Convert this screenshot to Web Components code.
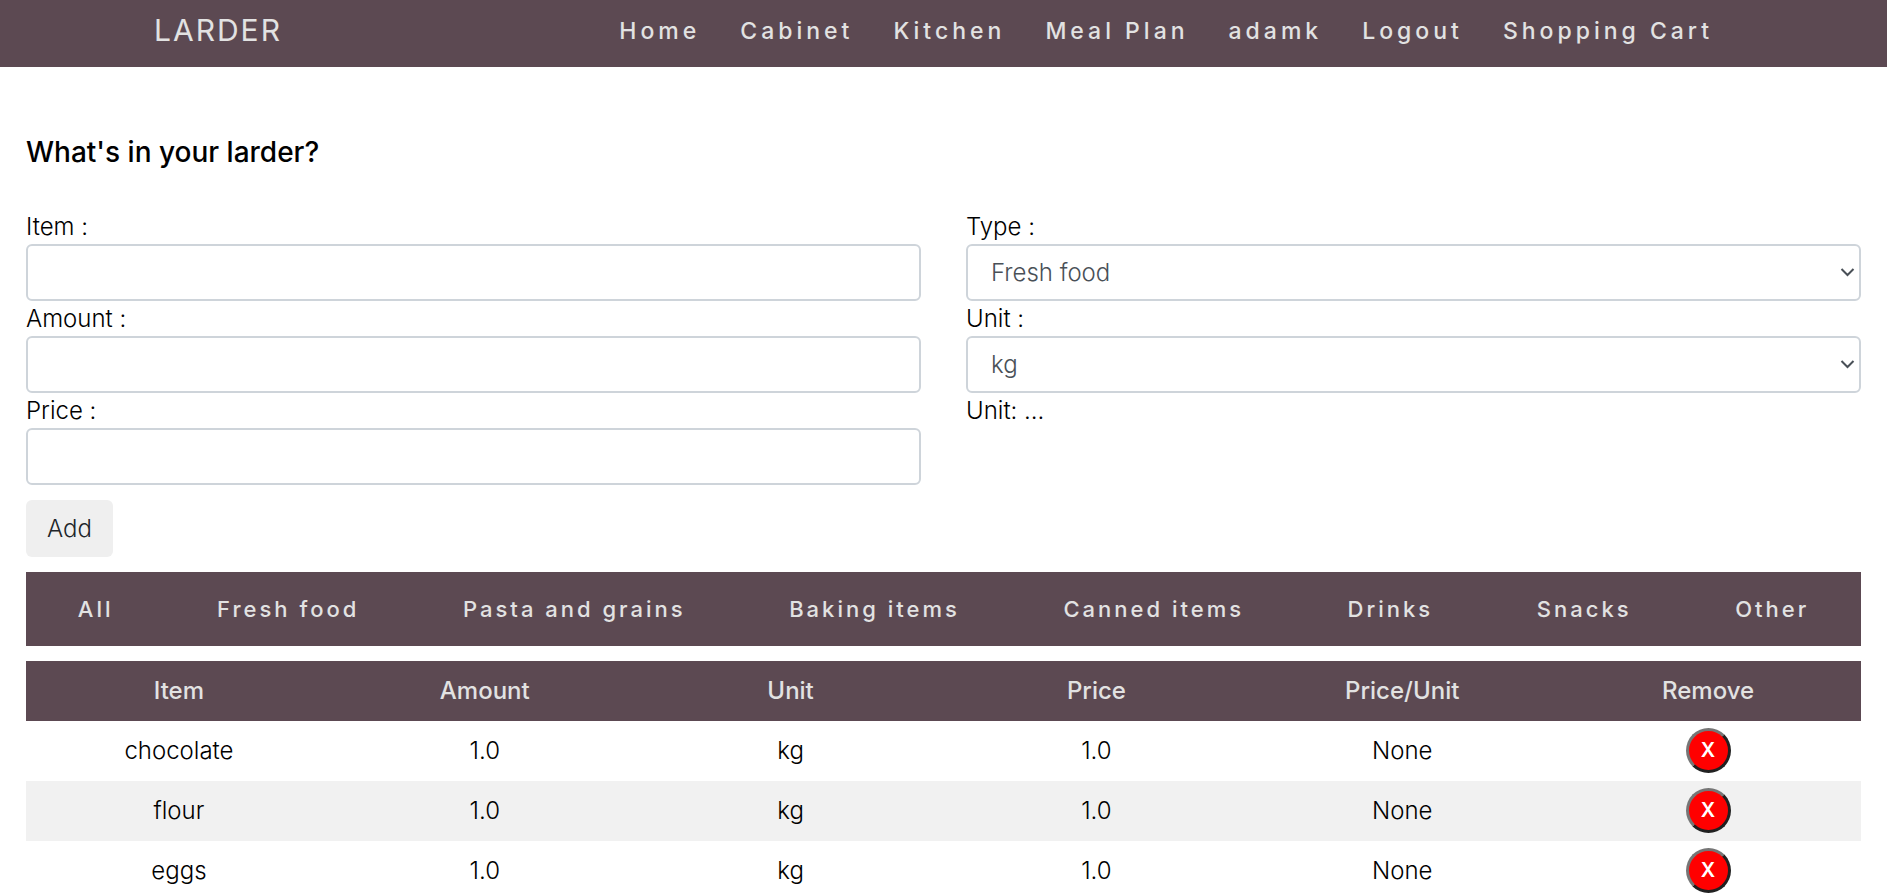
<!DOCTYPE html>
<html lang="en">
<head>
<meta charset="utf-8">
<title>Larder</title>
<style>
  :root { --plum: #5c4952; --pale: #e2e2e2; --line: #ced4da; }
  body { margin: 0; background: #fff; color: #000; font: 300 24px/36px Inter, "Open Sans", sans-serif; }
</style>
</head>
<body>
<larder-page></larder-page>
<script>
const make = (tag, html, setup) => customElements.define(tag, class extends HTMLElement {
  constructor() {
    super();
    this.attachShadow({ mode: "open" }).innerHTML = html;
  }
  connectedCallback() { if (setup) setup(this, this.shadowRoot); }
});

/* Top navigation bar */
make("larder-nav", `
<style>
  :host { display: block; background: var(--plum); }
  nav { display: flex; justify-content: space-between; align-items: center; height: 67px; padding: 0 174px 0 154px; box-sizing: border-box; }
  a { color: var(--pale); text-decoration: none; white-space: nowrap; }
  .brand { font-size: 30px; font-weight: 400; letter-spacing: 2px; padding-bottom: 8px; }
  ul { display: flex; gap: 40px; list-style: none; margin: 0; padding: 0 0 6px; }
  ul a { font-size: 23px; font-weight: 500; letter-spacing: 4px; }
</style>
<nav>
  <a class="brand" href="#">LARDER</a>
  <ul>
    <li><a href="#">Home</a></li><li><a href="#">Cabinet</a></li><li><a href="#">Kitchen</a></li>
    <li><a href="#">Meal Plan</a></li><li><a href="#">adamk</a></li><li><a href="#">Logout</a></li>
    <li><a href="#">Shopping Cart</a></li>
  </ul>
</nav>`);

/* Label with a text box, or with a drop-down when options are given */
make("larder-field", `
<style>
  :host { display: block; }
  label { display: block; height: 35px; line-height: 35px; }
  .box { position: relative; }
  input, select { display: block; width: 100%; height: 57px; box-sizing: border-box; margin: 0; padding: 0 23px;
    border: 2px solid var(--line); border-radius: 6px; background: #fff; color: #495057; font: inherit; appearance: none; }
  svg { position: absolute; right: 6px; top: 22px; pointer-events: none; }
</style>
<label for="control"></label><div class="box"></div>`, (el, root) => {
  root.querySelector("label").textContent = el.getAttribute("label");
  const options = el.getAttribute("options");
  root.querySelector(".box").innerHTML = options
    ? `<select id="control">${options.split(",").map(o => `<option>${o}</option>`).join("")}</select>
       <svg width="15" height="13" viewBox="0 0 15 13" fill="none" stroke="#495057" stroke-width="2"><path d="M1.5 3 L7.5 9 L13.5 3"/></svg>`
    : `<input id="control" type="text">`;
});

/* Form for adding an item */
make("larder-form", `
<style>
  :host { display: block; }
  form { display: grid; grid-template-columns: 1fr 1fr; column-gap: 45px; margin: 0; }
  p { margin: 0; height: 35px; line-height: 35px; }
  button { display: block; margin: 15px 0; height: 57px; padding: 0 21px; border: 0; border-radius: 6px;
    background: #efefef; color: #212529; font: inherit; }
</style>
<form>
  <div>
    <larder-field label="Item :"></larder-field>
    <larder-field label="Amount :"></larder-field>
    <larder-field label="Price :"></larder-field>
    <button type="button">Add</button>
  </div>
  <div>
    <larder-field label="Type :" options="Fresh food,Pasta and grains,Baking items,Canned items,Drinks,Snacks,Other"></larder-field>
    <larder-field label="Unit :" options="kg,g,l,ml"></larder-field>
    <p>Unit: ...</p>
  </div>
</form>`);

/* Category filter bar */
make("larder-filter", `
<style>
  :host { display: block; background: var(--plum); }
  nav { display: flex; justify-content: space-around; align-items: center; height: 74px; }
  a { color: var(--pale); text-decoration: none; font-size: 22px; font-weight: 500; letter-spacing: 3px; white-space: nowrap; }
</style>
<nav><a href="#">All</a><a href="#">Fresh food</a><a href="#">Pasta and grains</a><a href="#">Baking items</a><a href="#">Canned items</a><a href="#">Drinks</a><a href="#">Snacks</a><a href="#">Other</a></nav>`);

/* Table of stored items */
make("larder-table", `
<style>
  :host { display: block; }
  table { width: 100%; table-layout: fixed; border-collapse: collapse; text-align: center; }
  th, td { height: 60px; padding: 0; box-sizing: border-box; vertical-align: middle; }
  th { background: var(--plum); color: var(--pale); font-weight: 500; }
  td:last-child { padding-bottom: 2px; }
  tbody tr:nth-child(even) { background: #f1f1f1; }
  button { display: block; width: 45px; height: 45px; margin: 0 auto; padding: 0; border: 3px solid;
    border-color: #767676 #212121 #212121 #767676; border-radius: 50%; background: red; color: #fff;
    font: 600 20px/39px Inter, sans-serif; }
</style>
<table>
  <thead><tr><th>Item</th><th>Amount</th><th>Unit</th><th>Price</th><th>Price/Unit</th><th>Remove</th></tr></thead>
  <tbody></tbody>
</table>`, (el, root) => {
  root.querySelector("tbody").innerHTML = ["chocolate", "flour", "eggs"].map(name =>
    `<tr><td>${name}</td><td>1.0</td><td>kg</td><td>1.0</td><td>None</td><td><button type="button">X</button></td></tr>`).join("");
});

make("larder-page", `
<style>
  :host { display: block; }
  main { padding: 0 26px; }
  h1 { margin: 0; padding: 67px 0 39px; font-size: 28px; line-height: 36px; font-weight: 500; }
  larder-table { margin-top: 15px; }
</style>
<larder-nav></larder-nav>
<main>
  <h1>What's in your larder?</h1>
  <larder-form></larder-form>
  <larder-filter></larder-filter>
  <larder-table></larder-table>
</main>`);
</script>
</body>
</html>
